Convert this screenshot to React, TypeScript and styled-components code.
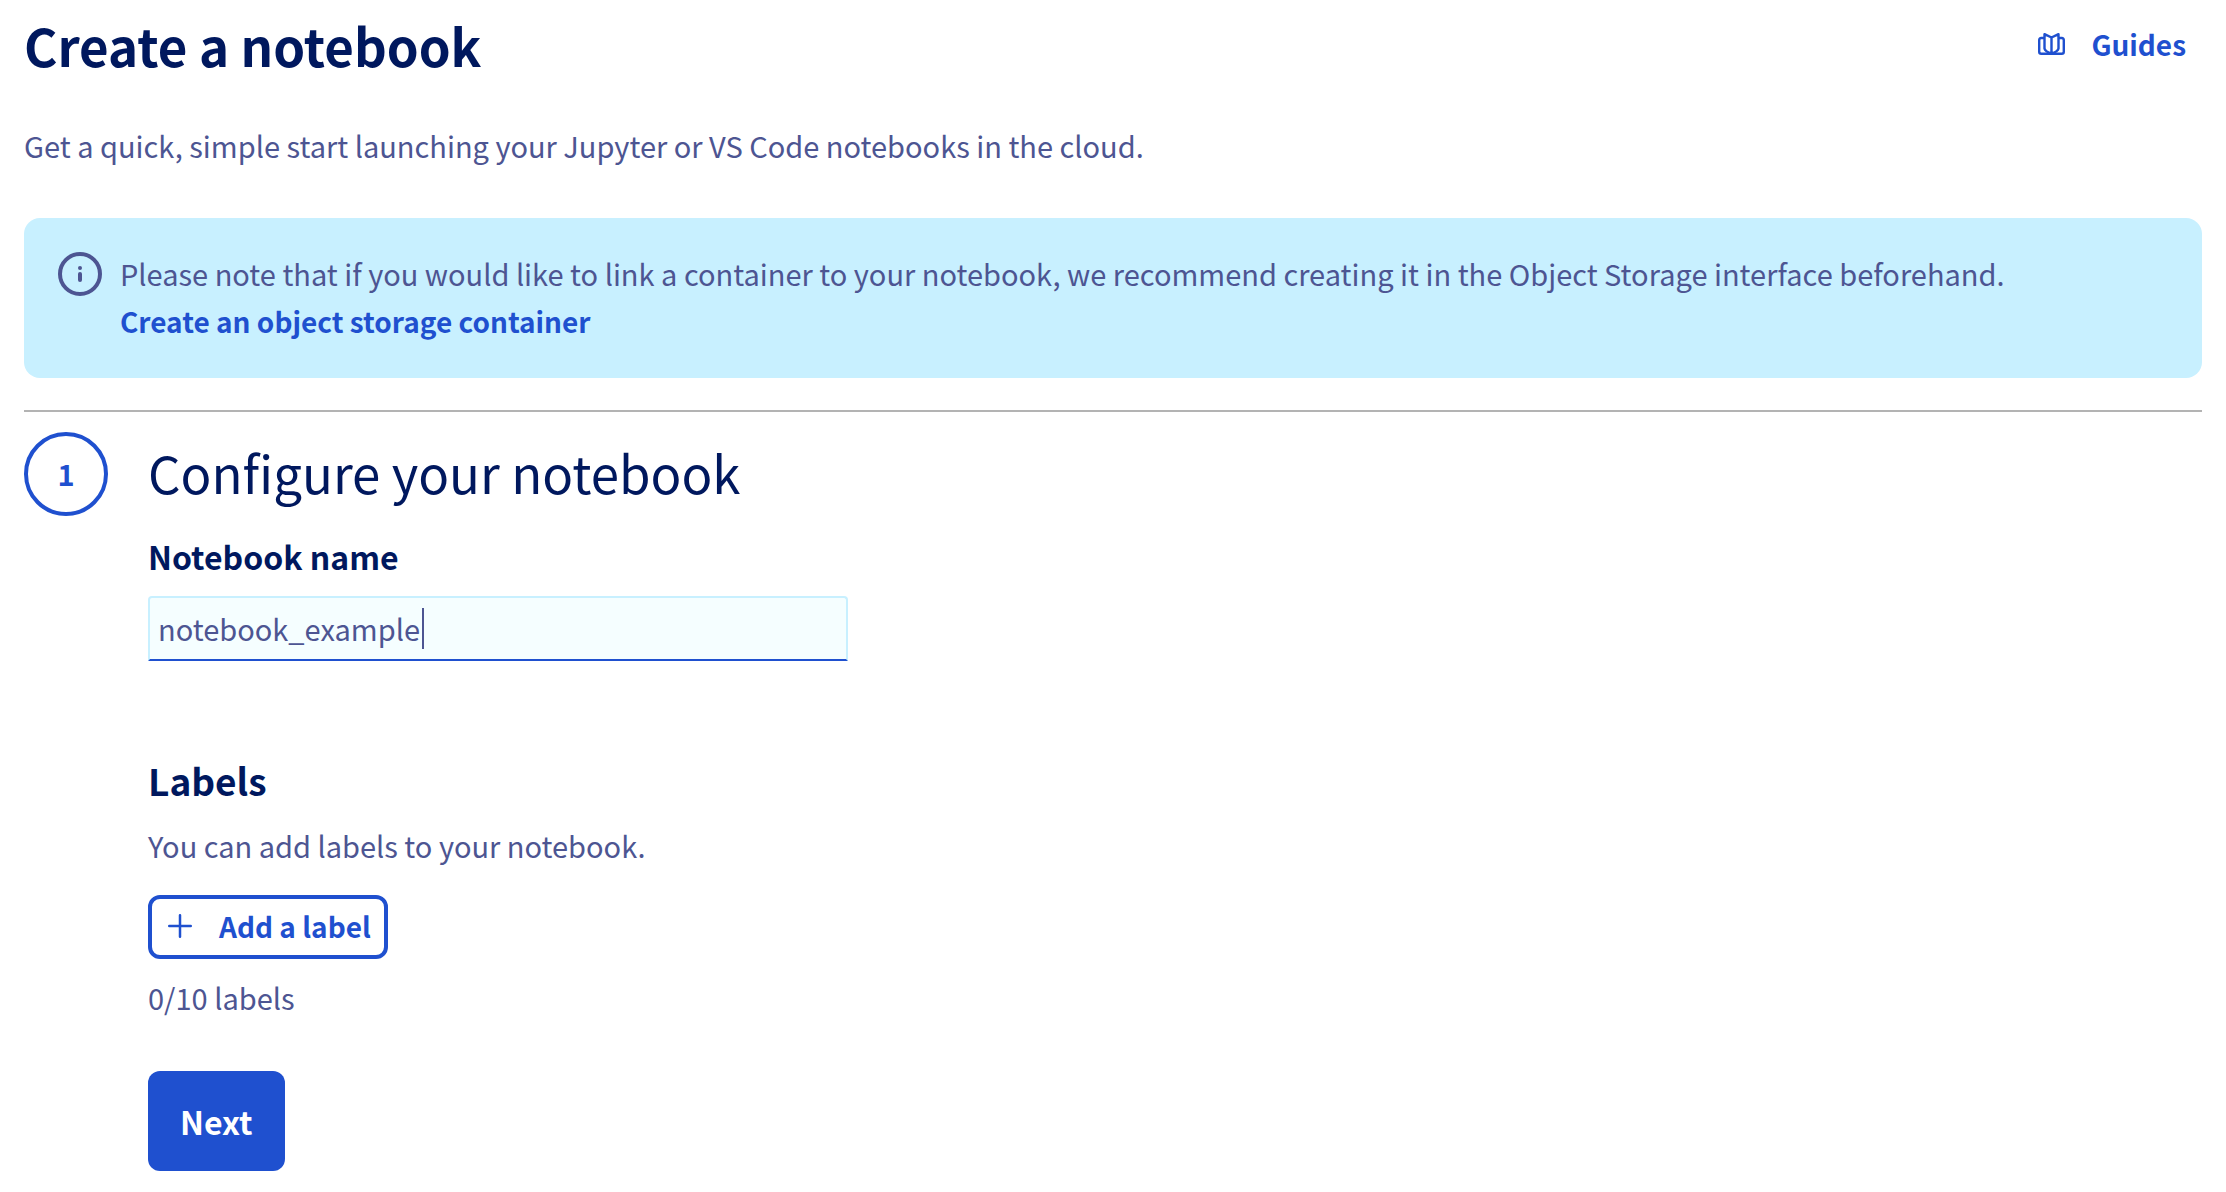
import React, { useState } from 'react';
import styled, { createGlobalStyle } from 'styled-components';

const navy = '#00185e';
const slate = '#4d5592';
const blue = '#1f50cf';

const GlobalStyle = createGlobalStyle`
  *, *::before, *::after { box-sizing: border-box; }
  body {
    margin: 0;
    background: #fff;
    color: ${slate};
    font-family: "Noto Sans CJK SC", "Noto Sans", sans-serif;
    font-size: 29px;
    line-height: 48px;
  }
  h1, h2, h3, p { margin: 0; }
  button, input { font: inherit; }
`;

const Page = styled.main`
  padding: 13px 24px 20px;
`;

const Header = styled.header`
  display: flex;
  justify-content: space-between;
  align-items: flex-start;
  margin-bottom: 44px;
`;

const Title = styled.h1`
  color: ${navy};
  font-size: 51px;
  line-height: 64px;
  font-weight: 700;
`;

const TextLink = styled.a`
  display: block;
  color: ${blue};
  font-size: 28px;
  font-weight: 700;
  text-decoration: none;
`;

const GuidesLink = styled(TextLink)`
  display: flex;
  align-items: center;
  gap: 26px;
  padding: 7px 16px;
`;

const Banner = styled.section`
  display: flex;
  gap: 18px;
  margin-top: 49px;
  padding: 31px 32px 33px;
  border-radius: 16px;
  background: #c8f0ff;
`;

const InfoIcon = styled.svg`
  flex: none;
  margin: 3px 0 0 2px;
`;

const Divider = styled.hr`
  height: 2px;
  margin: 32px 0 20px;
  border: 0;
  background: #b3b3b3;
`;

const Step = styled.section`
  display: flex;
  align-items: flex-start;
  gap: 40px;
`;

const StepNumber = styled.span`
  display: grid;
  place-items: center;
  flex: none;
  width: 84px;
  height: 84px;
  padding-bottom: 2px;
  border: 4px solid ${blue};
  border-radius: 50%;
  color: ${blue};
  font-weight: 700;
`;

const StepBody = styled.div`
  flex: 1;
  min-width: 0;
`;

const StepTitle = styled.h2`
  color: ${navy};
  font-size: 51px;
  line-height: 80px;
  font-weight: 400;
`;

const Field = styled.div`
  display: flex;
  flex-direction: column;
  gap: 16px;
  max-width: 700px;
  margin: 20px 0 95px;
`;

const FieldLabel = styled.label`
  color: ${navy};
  font-size: 32px;
  font-weight: 700;
`;

const InputBox = styled.div`
  position: relative;
`;

const TextInput = styled.input`
  display: block;
  width: 100%;
  height: 65px;
  padding: 0 8px 2px;
  border: 2px solid #c8f0ff;
  border-bottom-color: ${blue};
  border-radius: 4px 4px 0 0;
  outline: none;
  background: #f5feff;
  color: ${slate};
  caret-color: transparent;
`;

const Caret = styled.span`
  position: absolute;
  top: 12px;
  left: 274px;
  width: 2px;
  height: 41px;
  background: ${slate};
`;

const SubTitle = styled.h3`
  margin-bottom: 17px;
  color: ${navy};
  font-size: 37px;
  font-weight: 700;
`;

const AddButton = styled.button`
  display: flex;
  align-items: center;
  gap: 27px;
  height: 64px;
  margin: 26px 0 14px;
  padding: 0 13px 2px 16px;
  border: 4px solid ${blue};
  border-radius: 12px;
  background: #fff;
  color: ${blue};
  font-size: 28px;
  font-weight: 700;
`;

const NextButton = styled.button`
  height: 100px;
  margin-top: 50px;
  padding: 0 32px;
  border: 0;
  border-radius: 12px;
  background: ${blue};
  color: #fff;
  font-size: 32px;
  font-weight: 700;
`;

export default function App() {
  const [name, setName] = useState('notebook_example');
  return (
    <>
      <GlobalStyle />
      <Page>
        <Header>
          <Title>Create a notebook</Title>
          <GuidesLink href="#guides">
            <svg width="27" height="22" viewBox="0 0 27 22" fill="none" stroke={blue} strokeWidth="2.400" strokeLinejoin="round" strokeLinecap="round" aria-hidden="true">
              <path d="M6 5H3.200Q1.200 5 1.200 7V18.800Q1.200 20.800 3.200 20.800H23.800Q25.800 20.800 25.800 18.800V7Q25.800 5 23.800 5H21" />
              <path d="M13.500 4.500L6.500 1.200V15.500Q7 18.500 13.500 20.500Q20 18.500 20.500 15.500V1.200L13.500 4.500V20" />
            </svg>
            Guides
          </GuidesLink>
        </Header>
        <p>Get a quick, simple start launching your Jupyter or VS Code notebooks in the cloud.</p>
        <Banner>
          <InfoIcon width="44" height="44" viewBox="0 0 44 44" fill="none" stroke={slate} aria-hidden="true">
            <circle cx="22" cy="22" r="20" strokeWidth="4" />
            <path d="M22 22V28" strokeWidth="4" strokeLinecap="round" />
            <circle cx="22" cy="16" r="2" fill={slate} stroke="none" />
          </InfoIcon>
          <div>
            <p>
              Please note that if you would like to link a container to your notebook, we recommend creating it in the
              Object Storage interface beforehand.
            </p>
            <TextLink href="#object-storage">Create an object storage container</TextLink>
          </div>
        </Banner>
        <Divider />
        <Step>
          <StepNumber>1</StepNumber>
          <StepBody>
            <StepTitle>Configure your notebook</StepTitle>
            <Field>
              <FieldLabel htmlFor="notebook-name">Notebook name</FieldLabel>
              <InputBox>
                <TextInput id="notebook-name" value={name} onChange={(e) => setName(e.target.value)} />
                <Caret />
              </InputBox>
            </Field>
            <SubTitle>Labels</SubTitle>
            <p>You can add labels to your notebook.</p>
            <AddButton type="button">
              <svg width="24" height="24" viewBox="0 0 24 24" stroke={blue} strokeWidth="2.500" strokeLinecap="round" aria-hidden="true">
                <path d="M12 1.250V22.750M1.250 12H22.750" />
              </svg>
              Add a label
            </AddButton>
            <p>0/10 labels</p>
            <NextButton type="button">Next</NextButton>
          </StepBody>
        </Step>
      </Page>
    </>
  );
}
